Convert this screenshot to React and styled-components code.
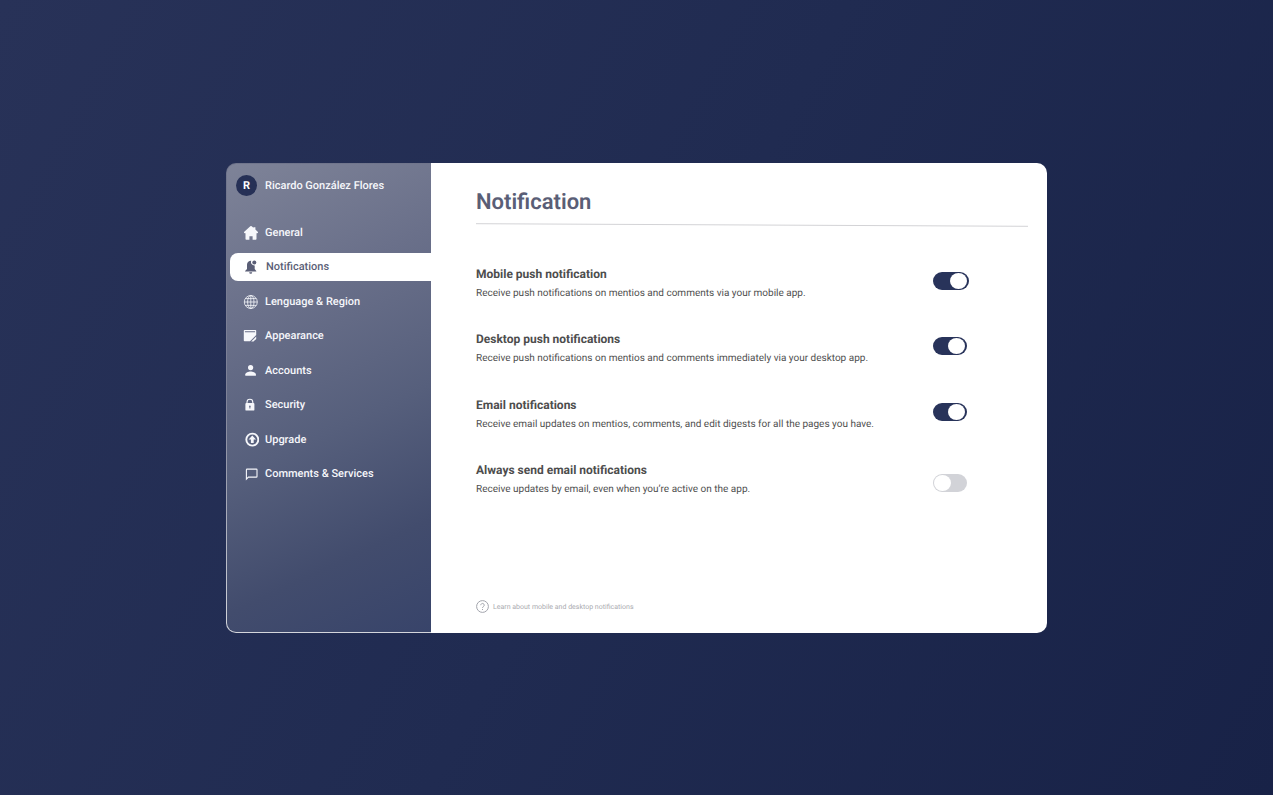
import React, { useState } from "react";
import styled, { createGlobalStyle } from "styled-components";

const GlobalStyle = createGlobalStyle`
  *, *::before, *::after { box-sizing: border-box; }
  body {
    margin: 0;
    font-family: Roboto, "Liberation Sans", sans-serif;
    text-rendering: geometricPrecision;
    background: #192347;
  }
`;

const Page = styled.div`
  min-height: 100vh;
  display: flex;
  align-items: center;
  justify-content: center;
  background: linear-gradient(118deg, #283258 0%, #202b51 50%, #182247 100%);
`;

const Card = styled.div`
  display: flex;
  width: 100%;
  max-width: 821px;
  min-height: 470px;
`;

const Sidebar = styled.aside`
  flex: 0 0 205px;
  padding: 11px 0 20px;
  border: 1px solid transparent;
  border-right: 0;
  border-radius: 10px 0 0 10px;
  background:
    linear-gradient(155deg, #7e8398 0%, #6a708a 28%, #565f7c 56%, #424c6d 80%, #38446a 100%) padding-box,
    linear-gradient(180deg, #70758c 0%, #7e8298 50%, #d4d6dc 100%) border-box;
`;

const Profile = styled.div`
  display: flex;
  align-items: center;
  gap: 8px;
  padding-left: 9px;
  margin-bottom: 22px;
  color: #f6f7fb;
  font-size: 11px;
  font-weight: 500;
  line-height: 22px;
`;

const Avatar = styled.span`
  width: 21px;
  height: 21px;
  border-radius: 50%;
  background: #263056;
  color: #fff;
  font-weight: 700;
  line-height: 21px;
  text-align: center;
`;

const Nav = styled.nav`
  display: grid;
  align-content: space-between;
  min-height: 270px;
  padding-left: 3px;
`;

const NavLink = styled.a`
  display: flex;
  align-items: center;
  gap: ${({ $active }) => ($active ? 7 : 6)}px;
  height: 28px;
  padding-left: 13px;
  border-radius: 8px 0 0 8px;
  background: ${({ $active }) => ($active ? "#fff" : "transparent")};
  color: ${({ $active }) => ($active ? "#5a5e76" : "#f6f7fb")};
  font-size: 11px;
  font-weight: 500;
  line-height: 16px;
  text-decoration: none;
`;

const Icon = styled.svg`
  flex: none;
  width: 16px;
  height: 16px;
  fill: currentColor;
`;

const Main = styled.main`
  flex: 1;
  display: flex;
  flex-direction: column;
  align-items: stretch;
  min-width: 0;
  padding: 26px 19px 19px 45px;
  border-radius: 0 10px 10px 0;
  background: #fff;
`;

const Title = styled.h1`
  margin: 0 0 6px;
  color: #5a5e76;
  font-size: 22px;
  font-weight: 600;
  line-height: 28px;
`;

const Rule = styled.svg`
  display: block;
  width: 100%;
  height: 4px;
  margin-bottom: 38px;
`;

const Settings = styled.div`
  display: grid;
  align-content: space-between;
  min-height: 234px;
  padding-right: 59px;
`;

const Setting = styled.div`
  display: flex;
  align-items: flex-start;
  justify-content: space-between;
`;

const SettingLabel = styled.label`
  display: block;
  color: #4d4d4d;
  font-size: 12px;
  font-weight: 700;
  line-height: 18px;
`;

const Description = styled.p`
  margin: 3px 0 0;
  color: #4f4f4f;
  font-size: 10px;
  line-height: 16px;
`;

const ToggleCell = styled.div`
  display: flex;
  flex: 0 0 36px;
  padding-top: ${({ $low }) => ($low ? 13 : 7)}px;
`;

const Toggle = styled.input`
  appearance: none;
  display: flex;
  align-items: center;
  justify-content: flex-start;
  width: ${({ $wide }) => ($wide ? 36 : 34)}px;
  height: 18px;
  margin: 0;
  padding: 0 2px 0 1px;
  border-radius: 9px;
  background: #d2d3d8;
  cursor: pointer;

  &::before {
    content: "";
    width: 17px;
    height: 16px;
    border-radius: 50%;
    background: #fff;
  }

  &:checked {
    justify-content: flex-end;
    background: #28335a;
  }
`;

const HelpLink = styled.a`
  display: flex;
  align-items: center;
  align-self: flex-start;
  gap: 4px;
  margin-top: auto;
  color: #aaabb0;
  font-size: 7px;
  line-height: 14px;
  text-decoration: none;
`;

const HelpIcon = styled.svg`
  width: 13px;
  height: 13px;
  fill: none;
  stroke: #a2a4ac;
`;

const icons = {
  home: (
    <path d="M7.300 1.200a1.100 1.100 0 0 1 1.400 0l1.700 1.500V2.200h2v2.300l2.300 2.200c.6.600.3 1.600-.6 1.600h-.6V14c0 .5-.3.800-.8.800H9.600v-3.600H6.400v3.600H3.300c-.5 0-.8-.3-.8-.8V8.300h-.6c-.9 0-1.200-1-.6-1.600z" />
  ),
  bell: (
    <>
      <path d="M8.300 1.700A4 4 0 0 0 4 5.700V10L2.100 12v.6h11.200V12L11.700 10V6.500a3.400 3.400 0 0 1-3.400-4.800z" />
      <path d="M6.200 13.200h3a1.500 1.500 0 0 1-3 0z" />
      <circle cx="11.300" cy="3.600" r="2" />
    </>
  ),
  globe: (
    <g fill="none" stroke="currentColor" strokeWidth="0.800">
      <circle cx="7.800" cy="8" r="6.500" />
      <ellipse cx="7.800" cy="8" rx="3.200" ry="6.500" />
      <path d="M7.800 1.500v13M1.300 8h13M2.300 4.600h11M2.300 11.400h11" />
    </g>
  ),
  appearance: (
    <>
      <path
        fillRule="evenodd"
        d="M1.600 2h10.800c.5 0 .8.300.8.800v4.200L7 13.300H1.600c-.5 0-.8-.3-.8-.8V2.800c0-.5.300-.8.800-.8zM1.900 3.200v1h10.200v-1z"
      />
      <path d="M8.200 13.600l5-5v2.300l-2.700 2.700z" />
    </>
  ),
  account: (
    <>
      <circle cx="7.600" cy="4.600" r="2.600" />
      <path d="M2.300 12.700v-1.400c0-1.800 3.300-2.900 5.300-2.900s5.300 1.100 5.300 2.900v1.400z" />
    </>
  ),
  lock: (
    <>
      <path d="M4 6V5.200a2.900 2.900 0 0 1 5.800 0V6" fill="none" stroke="currentColor" strokeWidth="1.100" />
      <path
        fillRule="evenodd"
        d="M3.300 6h7.200c.5 0 .9.400.9.900v5.800c0 .5-.4.900-.9.900H3.300a.9.900 0 0 1-.9-.9V6.900c0-.5.400-.9.900-.9zM6.900 8.400a.9.900 0 0 0-.5 1.600v1.500h1V10a.9.900 0 0 0-.5-1.600z"
      />
    </>
  ),
  upgrade: (
    <>
      <circle cx="9.300" cy="7.600" r="6" fill="none" stroke="currentColor" strokeWidth="1.900" />
      <path d="M9.300 3.500l3.700 4h-2.300v3.500H7.900V7.500H5.600z" />
    </>
  ),
  comments: (
    <path
      d="M4.100 3.100h9.200c.4 0 .7.300.7.700v6.600c0 .4-.3.700-.7.700H5.400l-2 2V3.800c0-.4.300-.7.700-.7z"
      fill="none"
      stroke="currentColor"
      strokeWidth="1.100"
    />
  ),
};

const navItems = [
  { icon: "home", label: "General" },
  { icon: "bell", label: "Notifications", active: true },
  { icon: "globe", label: "Lenguage & Region" },
  { icon: "appearance", label: "Appearance" },
  { icon: "account", label: "Accounts" },
  { icon: "lock", label: "Security" },
  { icon: "upgrade", label: "Upgrade" },
  { icon: "comments", label: "Comments & Services" },
];

const settings = [
  {
    id: "mobile",
    label: "Mobile push notification",
    text: "Receive push notifications on mentios and comments via your mobile app.",
    wide: true,
  },
  {
    id: "desktop",
    label: "Desktop push notifications",
    text: "Receive push notifications on mentios and comments immediately via your desktop app.",
  },
  {
    id: "email",
    label: "Email notifications",
    text: "Receive email updates on mentios, comments, and edit digests for all the pages you have.",
  },
  {
    id: "always",
    label: "Always send email notifications",
    text: "Receive updates by email, even when you’re active on the app.",
    low: true,
  },
];

export default function App() {
  const [enabled, setEnabled] = useState({ mobile: true, desktop: true, email: true, always: false });
  const flip = (id) => setEnabled((now) => ({ ...now, [id]: !now[id] }));

  return (
    <>
      <GlobalStyle />
      <Page>
        <Card>
          <Sidebar>
            <Profile>
              <Avatar>R</Avatar>
              Ricardo González Flores
            </Profile>
            <Nav>
              {navItems.map(({ icon, label, active }) => (
                <NavLink key={icon} href={`#${icon}`} $active={active} aria-current={active ? "page" : undefined}>
                  <Icon viewBox="0 0 16 16" aria-hidden="true">{icons[icon]}</Icon>
                  {label}
                </NavLink>
              ))}
            </Nav>
          </Sidebar>
          <Main>
            <Title>Notification</Title>
            <Rule viewBox="0 0 552 4" preserveAspectRatio="none" aria-hidden="true">
              <path d="M0 .7L552 3.300" stroke="#d3d3d6" strokeWidth="1" />
            </Rule>
            <Settings>
              {settings.map(({ id, label, text, wide, low }) => (
                <Setting key={id}>
                  <div>
                    <SettingLabel htmlFor={id}>{label}</SettingLabel>
                    <Description>{text}</Description>
                  </div>
                  <ToggleCell $low={low}>
                    <Toggle id={id} type="checkbox" $wide={wide} checked={enabled[id]} onChange={() => flip(id)} />
                  </ToggleCell>
                </Setting>
              ))}
            </Settings>
            <HelpLink href="#help">
              <HelpIcon viewBox="0 0 13 13" aria-hidden="true">
                <circle cx="6.500" cy="6.500" r="5.900" />
                <path d="M4.800 5.200a1.700 1.700 0 1 1 2.700 1.300c-.6.400-1 .7-1 1.400M6.500 9v1" />
              </HelpIcon>
              Learn about mobile and desktop notifications
            </HelpLink>
          </Main>
        </Card>
      </Page>
    </>
  );
}
